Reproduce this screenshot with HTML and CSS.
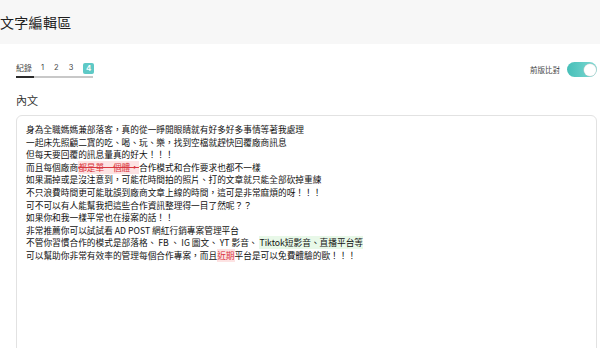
FILE: index.html
```html
<!DOCTYPE html>
<html lang="zh-Hant">
<head>
<meta charset="utf-8">
<link rel="stylesheet" href="styles.css">
</head>
<body>
<header class="topbar"><h1 class="title">文字編輯區</h1></header>
<main class="content">
  <div class="toolbar">
    <div class="tabs">
      <div class="tab-list">
        <span class="tab">紀錄</span>
        <span class="tab num">1</span>
        <span class="tab num">2</span>
        <span class="tab num">3</span>
        <span class="tab badge">4</span>
      </div>
      <div class="track"><span class="track-fill"></span></div>
    </div>
    <div class="compare">
      <span class="compare-label">前版比對</span>
      <span class="switch"><span class="knob"></span></span>
    </div>
  </div>
  <div class="label">內文</div>
  <div class="editor">
    <p>身為全職媽媽兼部落客，真的從一睜開眼睛就有好多好多事情等著我處理</p>
    <p>一起床先照顧二寶的吃、喝、玩、樂，找到空檔就趕快回覆廠商訊息</p>
    <p>但每天要回覆的訊息量真的好大！！！</p>
    <p>而且每個廠商<del class="removed">都是單一個體，</del>合作模式和合作要求也都不一樣</p>
    <p>如果漏掉或是沒注意到，可能花時間拍的照片、打的文章就只能全部砍掉重練</p>
    <p>不只浪費時間更可能耽誤到廠商文章上線的時間，這可是非常麻煩的呀！！！</p>
    <p>可不可以有人能幫我把這些合作資訊整理得一目了然呢？？</p>
    <p>如果你和我一樣平常也在接案的話！！</p>
    <p>非常推薦你可以試試看 AD POST 網紅行銷專案管理平台</p>
    <p>不管你習慣合作的模式是部落格、 FB 、 IG 圖文、 YT 影音、 <ins class="added">Tiktok短影音、直播平台等</ins></p>
    <p>可以幫助你非常有效率的管理每個合作專案，而且<span class="changed">近期</span>平台是可以免費體驗的歐！！！</p>
  </div>
</main>
</body>
</html>
```
FILE: styles.css
```css
* { box-sizing: border-box; }
html, body { margin: 0; padding: 0; background: #fff; }
body {
  font-family: "Noto Sans CJK TC", "Noto Sans", sans-serif;
  color: #222;
  width: 600px;
  height: 348px;
  overflow: hidden;
}
.topbar {
  height: 44px;
  background: #f7f7f7;
  display: flex;
  align-items: center;
}
.title {
  margin: 0;
  font-size: 14px;
  font-weight: 400;
  color: #1f1f1f;
  letter-spacing: 0.3px;
}
.content {
  padding: 16px 3px 0 16px;
}
.toolbar {
  display: flex;
  justify-content: space-between;
  align-items: flex-start;
  height: 33px;
}
.tabs {
  display: flex;
  flex-direction: column;
  width: 77px;
  flex-shrink: 0;
  padding-top: 2px;
}
.tab-list {
  display: flex;
  align-items: center;
  height: 12px;
  font-size: 8px;
  color: #444;
  white-space: nowrap;
}
.tab { margin-right: 9px; line-height: 12px; flex-shrink: 0; }
.tab.num { margin-right: 10px; font-family: "Inter", "Noto Sans", sans-serif; font-size: 7.5px; }
.tab.badge {
  margin-right: 0;
  width: 11px;
  height: 11px;
  background: #5ec9c6;
  color: #fff;
  border-radius: 2px;
  text-align: center;
  font-family: "Inter", "Noto Sans", sans-serif;
  font-size: 8px;
  font-weight: 600;
  line-height: 11px;
}
.track {
  margin-top: 2px;
  height: 2px;
  background: #c8c8c8;
  display: flex;
}
.track-fill { width: 18px; background: #2b2b2b; }
.compare {
  display: flex;
  align-items: center;
  gap: 7px;
  padding-top: 2px;
}
.compare-label { font-size: 7.5px; color: #444; }
.switch {
  position: relative;
  width: 30px;
  height: 15px;
  border-radius: 8px;
  background: linear-gradient(90deg, #46bfb8, #80d9d3);
}
.knob {
  position: absolute;
  right: 1.5px;
  top: 1.5px;
  width: 12px;
  height: 12px;
  border-radius: 50%;
  background: #fff;
  box-shadow: 0 0 0 0.5px #cfcfcf;
}
.label {
  font-size: 11px;
  color: #333;
  line-height: 14px;
  height: 22px;
}
.editor {
  border: 1px solid #e2e2e2;
  border-radius: 6px;
  height: 260px;
  padding: 8px 9px;
  font-size: 8.7px;
  line-height: 12.6px;
  color: #111;
}
.editor p { margin: 0; white-space: nowrap; }
.removed {
  color: #d9363e;
  background: #fde3e3;
  text-decoration: line-through;
}
.added {
  text-decoration: none;
  background: #e8f8e8;
}
.changed {
  color: #d9363e;
  background: #fde3e3;
}
```
